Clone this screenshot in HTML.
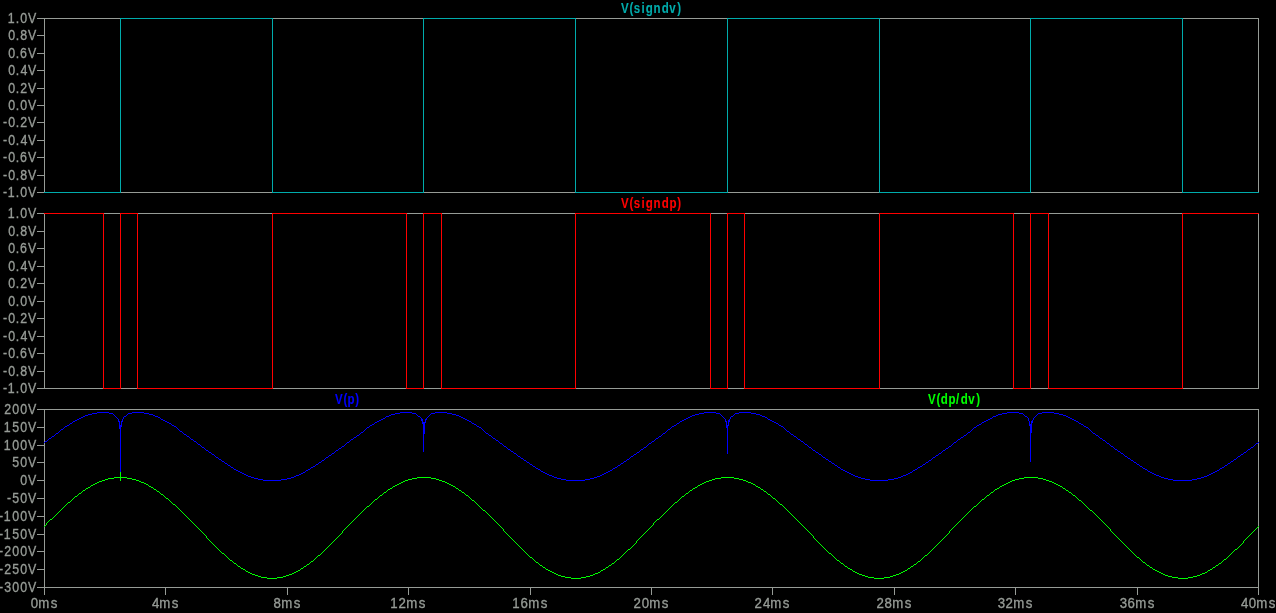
<!DOCTYPE html>
<html><head><meta charset="utf-8"><style>
html,body{margin:0;padding:0;background:#000;width:1276px;height:613px;overflow:hidden}
body{position:relative}
</style></head><body>
<svg width="1276" height="613" shape-rendering="crispEdges" style="position:absolute;left:0;top:0"><path fill="rgb(150,155,150)" d="M44 18h1215v1h-1215zM44 192h1215v1h-1215zM44 18h1v175h-1zM1258 18h1v175h-1zM37 18h7v1h-7zM37 35h7v1h-7zM37 53h7v1h-7zM37 70h7v1h-7zM37 88h7v1h-7zM37 105h7v1h-7zM37 122h7v1h-7zM37 140h7v1h-7zM37 157h7v1h-7zM37 175h7v1h-7zM37 192h7v1h-7zM44 213h1215v1h-1215zM44 388h1215v1h-1215zM44 213h1v176h-1zM1258 213h1v176h-1zM37 213h7v1h-7zM37 231h7v1h-7zM37 248h7v1h-7zM37 266h7v1h-7zM37 283h7v1h-7zM37 301h7v1h-7zM37 318h7v1h-7zM37 336h7v1h-7zM37 353h7v1h-7zM37 371h7v1h-7zM37 388h7v1h-7zM44 409h1215v1h-1215zM44 587h1215v1h-1215zM44 409h1v179h-1zM1258 409h1v179h-1zM37 409h7v1h-7zM37 427h7v1h-7zM37 445h7v1h-7zM37 462h7v1h-7zM37 480h7v1h-7zM37 498h7v1h-7zM37 516h7v1h-7zM37 534h7v1h-7zM37 551h7v1h-7zM37 569h7v1h-7zM37 587h7v1h-7zM44 588h1v7h-1zM165 588h1v7h-1zM287 588h1v7h-1zM408 588h1v7h-1zM530 588h1v7h-1zM651 588h1v7h-1zM772 588h1v7h-1zM894 588h1v7h-1zM1015 588h1v7h-1zM1137 588h1v7h-1zM1258 588h1v7h-1z"/><path fill="rgb(0,172,172)" d="M44 192h77v1h-77zM120 18h1v175h-1zM120 18h153v1h-153zM272 18h1v175h-1zM272 192h152v1h-152zM423 18h1v175h-1zM423 18h153v1h-153zM575 18h1v175h-1zM575 192h153v1h-153zM727 18h1v175h-1zM727 18h153v1h-153zM879 18h1v175h-1zM879 192h152v1h-152zM1030 18h1v175h-1zM1030 18h153v1h-153zM1182 18h1v175h-1zM1182 192h77v1h-77z"/><path fill="rgb(255,0,0)" d="M44 213h60v1h-60zM103 213h1v176h-1zM103 388h18v1h-18zM120 213h1v176h-1zM120 213h18v1h-18zM137 213h1v176h-1zM137 388h136v1h-136zM272 213h1v176h-1zM272 213h135v1h-135zM406 213h1v176h-1zM406 388h18v1h-18zM423 213h1v176h-1zM423 213h19v1h-19zM441 213h1v176h-1zM441 388h135v1h-135zM575 213h1v176h-1zM575 213h136v1h-136zM710 213h1v176h-1zM710 388h18v1h-18zM727 213h1v176h-1zM727 213h18v1h-18zM744 213h1v176h-1zM744 388h136v1h-136zM879 213h1v176h-1zM879 213h135v1h-135zM1013 213h1v176h-1zM1013 388h18v1h-18zM1030 213h1v176h-1zM1030 213h19v1h-19zM1048 213h1v176h-1zM1048 388h135v1h-135zM1182 213h1v176h-1zM1182 213h77v1h-77z"/><path fill="rgb(0,0,255)" d="M44 442h1v1h-1zM45 441h1v1h-1zM46 441h1v1h-1zM47 440h1v1h-1zM48 439h1v1h-1zM49 438h1v1h-1zM50 438h1v1h-1zM51 437h1v1h-1zM52 436h1v1h-1zM53 436h1v1h-1zM54 435h1v1h-1zM55 434h1v1h-1zM56 433h1v1h-1zM57 433h1v1h-1zM58 432h1v1h-1zM59 431h1v1h-1zM60 430h1v1h-1zM61 429h1v1h-1zM62 429h1v1h-1zM63 428h1v1h-1zM64 427h1v1h-1zM65 426h1v1h-1zM66 426h1v1h-1zM67 425h1v1h-1zM68 425h1v1h-1zM69 424h1v1h-1zM70 423h1v1h-1zM71 423h1v1h-1zM72 422h1v1h-1zM73 421h1v1h-1zM74 421h1v1h-1zM75 420h1v1h-1zM76 420h1v1h-1zM77 419h1v1h-1zM78 419h1v1h-1zM79 418h1v1h-1zM80 418h1v1h-1zM81 417h1v1h-1zM82 417h1v1h-1zM83 416h1v1h-1zM84 416h1v1h-1zM85 415h1v1h-1zM86 415h1v1h-1zM87 415h1v1h-1zM88 414h1v1h-1zM89 414h1v1h-1zM90 414h1v1h-1zM91 414h1v1h-1zM92 413h1v1h-1zM93 413h1v1h-1zM94 413h1v1h-1zM95 413h1v1h-1zM96 413h1v1h-1zM97 412h1v1h-1zM98 412h1v1h-1zM99 412h1v1h-1zM100 412h1v1h-1zM101 412h1v1h-1zM102 412h1v1h-1zM103 412h1v1h-1zM104 412h1v1h-1zM105 412h1v1h-1zM106 412h1v1h-1zM107 412h1v1h-1zM108 412h1v1h-1zM109 413h1v1h-1zM110 413h1v1h-1zM111 413h1v1h-1zM112 413h1v1h-1zM113 414h1v1h-1zM114 415h1v1h-1zM115 416h1v1h-1zM116 417h1v1h-1zM117 418h1v1h-1zM118 419h1v3h-1zM119 421h1v8h-1zM120 425h1v47h-1zM121 421h1v6h-1zM122 419h1v3h-1zM123 417h1v2h-1zM124 416h1v1h-1zM125 416h1v1h-1zM126 415h1v1h-1zM127 414h1v1h-1zM128 413h1v1h-1zM129 413h1v1h-1zM130 413h1v1h-1zM131 413h1v1h-1zM132 412h1v1h-1zM133 412h1v1h-1zM134 412h1v1h-1zM135 412h1v1h-1zM136 412h1v1h-1zM137 412h1v1h-1zM138 412h1v1h-1zM139 412h1v1h-1zM140 412h1v1h-1zM141 412h1v1h-1zM142 412h1v1h-1zM143 412h1v1h-1zM144 413h1v1h-1zM145 413h1v1h-1zM146 413h1v1h-1zM147 413h1v1h-1zM148 413h1v1h-1zM149 414h1v1h-1zM150 414h1v1h-1zM151 414h1v1h-1zM152 414h1v1h-1zM153 415h1v1h-1zM154 415h1v1h-1zM155 416h1v1h-1zM156 416h1v1h-1zM157 416h1v1h-1zM158 417h1v1h-1zM159 417h1v1h-1zM160 418h1v1h-1zM161 419h1v1h-1zM162 419h1v1h-1zM163 420h1v1h-1zM164 420h1v1h-1zM165 421h1v1h-1zM166 421h1v1h-1zM167 422h1v1h-1zM168 422h1v1h-1zM169 423h1v1h-1zM170 423h1v1h-1zM171 424h1v1h-1zM172 425h1v1h-1zM173 425h1v1h-1zM174 426h1v1h-1zM175 426h1v1h-1zM176 427h1v1h-1zM177 428h1v1h-1zM178 429h1v1h-1zM179 430h1v1h-1zM180 431h1v1h-1zM181 431h1v1h-1zM182 432h1v1h-1zM183 433h1v1h-1zM184 434h1v1h-1zM185 434h1v1h-1zM186 435h1v1h-1zM187 436h1v1h-1zM188 436h1v1h-1zM189 437h1v1h-1zM190 438h1v1h-1zM191 439h1v1h-1zM192 439h1v1h-1zM193 440h1v1h-1zM194 441h1v1h-1zM195 441h1v1h-1zM196 442h1v1h-1zM197 443h1v1h-1zM198 444h1v1h-1zM199 444h1v1h-1zM200 445h1v1h-1zM201 446h1v1h-1zM202 447h1v1h-1zM203 447h1v1h-1zM204 448h1v1h-1zM205 449h1v1h-1zM206 450h1v1h-1zM207 450h1v1h-1zM208 451h1v1h-1zM209 452h1v1h-1zM210 452h1v1h-1zM211 453h1v1h-1zM212 454h1v1h-1zM213 454h1v1h-1zM214 455h1v1h-1zM215 456h1v1h-1zM216 457h1v1h-1zM217 457h1v1h-1zM218 458h1v1h-1zM219 459h1v1h-1zM220 459h1v1h-1zM221 460h1v1h-1zM222 461h1v1h-1zM223 461h1v1h-1zM224 462h1v1h-1zM225 463h1v1h-1zM226 463h1v1h-1zM227 464h1v1h-1zM228 465h1v1h-1zM229 465h1v1h-1zM230 466h1v1h-1zM231 467h1v1h-1zM232 467h1v1h-1zM233 468h1v1h-1zM234 469h1v1h-1zM235 469h1v1h-1zM236 470h1v1h-1zM237 470h1v1h-1zM238 471h1v1h-1zM239 471h1v1h-1zM240 472h1v1h-1zM241 472h1v1h-1zM242 473h1v1h-1zM243 473h1v1h-1zM244 474h1v1h-1zM245 474h1v1h-1zM246 475h1v1h-1zM247 475h1v1h-1zM248 476h1v1h-1zM249 476h1v1h-1zM250 476h1v1h-1zM251 477h1v1h-1zM252 477h1v1h-1zM253 477h1v1h-1zM254 478h1v1h-1zM255 478h1v1h-1zM256 478h1v1h-1zM257 478h1v1h-1zM258 479h1v1h-1zM259 479h1v1h-1zM260 479h1v1h-1zM261 479h1v1h-1zM262 479h1v1h-1zM263 480h1v1h-1zM264 480h1v1h-1zM265 480h1v1h-1zM266 480h1v1h-1zM267 480h1v1h-1zM268 480h1v1h-1zM269 480h1v1h-1zM270 480h1v1h-1zM271 480h1v1h-1zM272 480h1v1h-1zM273 480h1v1h-1zM274 480h1v1h-1zM275 480h1v1h-1zM276 480h1v1h-1zM277 480h1v1h-1zM278 480h1v1h-1zM279 480h1v1h-1zM280 480h1v1h-1zM281 479h1v1h-1zM282 479h1v1h-1zM283 479h1v1h-1zM284 479h1v1h-1zM285 479h1v1h-1zM286 479h1v1h-1zM287 478h1v1h-1zM288 478h1v1h-1zM289 478h1v1h-1zM290 478h1v1h-1zM291 477h1v1h-1zM292 477h1v1h-1zM293 477h1v1h-1zM294 476h1v1h-1zM295 476h1v1h-1zM296 475h1v1h-1zM297 475h1v1h-1zM298 475h1v1h-1zM299 474h1v1h-1zM300 474h1v1h-1zM301 473h1v1h-1zM302 473h1v1h-1zM303 472h1v1h-1zM304 472h1v1h-1zM305 471h1v1h-1zM306 470h1v1h-1zM307 470h1v1h-1zM308 469h1v1h-1zM309 469h1v1h-1zM310 468h1v1h-1zM311 467h1v1h-1zM312 467h1v1h-1zM313 466h1v1h-1zM314 466h1v1h-1zM315 465h1v1h-1zM316 464h1v1h-1zM317 464h1v1h-1zM318 463h1v1h-1zM319 462h1v1h-1zM320 462h1v1h-1zM321 461h1v1h-1zM322 460h1v1h-1zM323 460h1v1h-1zM324 459h1v1h-1zM325 458h1v1h-1zM326 457h1v1h-1zM327 457h1v1h-1zM328 456h1v1h-1zM329 455h1v1h-1zM330 455h1v1h-1zM331 454h1v1h-1zM332 453h1v1h-1zM333 453h1v1h-1zM334 452h1v1h-1zM335 451h1v1h-1zM336 450h1v1h-1zM337 450h1v1h-1zM338 449h1v1h-1zM339 448h1v1h-1zM340 448h1v1h-1zM341 447h1v1h-1zM342 446h1v1h-1zM343 446h1v1h-1zM344 445h1v1h-1zM345 444h1v1h-1zM346 443h1v1h-1zM347 442h1v1h-1zM348 442h1v1h-1zM349 441h1v1h-1zM350 440h1v1h-1zM351 439h1v1h-1zM352 439h1v1h-1zM353 438h1v1h-1zM354 437h1v1h-1zM355 437h1v1h-1zM356 436h1v1h-1zM357 435h1v1h-1zM358 435h1v1h-1zM359 434h1v1h-1zM360 433h1v1h-1zM361 432h1v1h-1zM362 432h1v1h-1zM363 431h1v1h-1zM364 430h1v1h-1zM365 429h1v1h-1zM366 428h1v1h-1zM367 427h1v1h-1zM368 427h1v1h-1zM369 426h1v1h-1zM370 425h1v1h-1zM371 425h1v1h-1zM372 424h1v1h-1zM373 424h1v1h-1zM374 423h1v1h-1zM375 422h1v1h-1zM376 422h1v1h-1zM377 421h1v1h-1zM378 421h1v1h-1zM379 420h1v1h-1zM380 420h1v1h-1zM381 419h1v1h-1zM382 419h1v1h-1zM383 418h1v1h-1zM384 418h1v1h-1zM385 417h1v1h-1zM386 416h1v1h-1zM387 416h1v1h-1zM388 416h1v1h-1zM389 415h1v1h-1zM390 415h1v1h-1zM391 414h1v1h-1zM392 414h1v1h-1zM393 414h1v1h-1zM394 414h1v1h-1zM395 413h1v1h-1zM396 413h1v1h-1zM397 413h1v1h-1zM398 413h1v1h-1zM399 413h1v1h-1zM400 412h1v1h-1zM401 412h1v1h-1zM402 412h1v1h-1zM403 412h1v1h-1zM404 412h1v1h-1zM405 412h1v1h-1zM406 412h1v1h-1zM407 412h1v1h-1zM408 412h1v1h-1zM409 412h1v1h-1zM410 412h1v1h-1zM411 412h1v1h-1zM412 413h1v1h-1zM413 413h1v1h-1zM414 413h1v1h-1zM415 413h1v1h-1zM416 414h1v1h-1zM417 415h1v1h-1zM418 416h1v1h-1zM419 416h1v1h-1zM420 417h1v1h-1zM421 418h1v3h-1zM422 419h1v5h-1zM423 422h1v30h-1zM424 422h1v12h-1zM425 419h1v4h-1zM426 418h1v2h-1zM427 417h1v1h-1zM428 416h1v1h-1zM429 415h1v1h-1zM430 414h1v1h-1zM431 413h1v1h-1zM432 413h1v1h-1zM433 413h1v1h-1zM434 413h1v1h-1zM435 412h1v1h-1zM436 412h1v1h-1zM437 412h1v1h-1zM438 412h1v1h-1zM439 412h1v1h-1zM440 412h1v1h-1zM441 412h1v1h-1zM442 412h1v1h-1zM443 412h1v1h-1zM444 412h1v1h-1zM445 412h1v1h-1zM446 412h1v1h-1zM447 413h1v1h-1zM448 413h1v1h-1zM449 413h1v1h-1zM450 413h1v1h-1zM451 413h1v1h-1zM452 414h1v1h-1zM453 414h1v1h-1zM454 414h1v1h-1zM455 414h1v1h-1zM456 415h1v1h-1zM457 415h1v1h-1zM458 415h1v1h-1zM459 416h1v1h-1zM460 416h1v1h-1zM461 417h1v1h-1zM462 417h1v1h-1zM463 418h1v1h-1zM464 418h1v1h-1zM465 419h1v1h-1zM466 419h1v1h-1zM467 420h1v1h-1zM468 420h1v1h-1zM469 421h1v1h-1zM470 421h1v1h-1zM471 422h1v1h-1zM472 423h1v1h-1zM473 423h1v1h-1zM474 424h1v1h-1zM475 424h1v1h-1zM476 425h1v1h-1zM477 426h1v1h-1zM478 426h1v1h-1zM479 427h1v1h-1zM480 427h1v1h-1zM481 428h1v1h-1zM482 429h1v1h-1zM483 430h1v1h-1zM484 431h1v1h-1zM485 432h1v1h-1zM486 433h1v1h-1zM487 433h1v1h-1zM488 434h1v1h-1zM489 435h1v1h-1zM490 435h1v1h-1zM491 436h1v1h-1zM492 437h1v1h-1zM493 438h1v1h-1zM494 438h1v1h-1zM495 439h1v1h-1zM496 440h1v1h-1zM497 440h1v1h-1zM498 441h1v1h-1zM499 442h1v1h-1zM500 443h1v1h-1zM501 443h1v1h-1zM502 444h1v1h-1zM503 445h1v1h-1zM504 446h1v1h-1zM505 446h1v1h-1zM506 447h1v1h-1zM507 448h1v1h-1zM508 449h1v1h-1zM509 449h1v1h-1zM510 450h1v1h-1zM511 451h1v1h-1zM512 451h1v1h-1zM513 452h1v1h-1zM514 453h1v1h-1zM515 453h1v1h-1zM516 454h1v1h-1zM517 455h1v1h-1zM518 456h1v1h-1zM519 456h1v1h-1zM520 457h1v1h-1zM521 458h1v1h-1zM522 458h1v1h-1zM523 459h1v1h-1zM524 460h1v1h-1zM525 460h1v1h-1zM526 461h1v1h-1zM527 462h1v1h-1zM528 462h1v1h-1zM529 463h1v1h-1zM530 464h1v1h-1zM531 464h1v1h-1zM532 465h1v1h-1zM533 466h1v1h-1zM534 466h1v1h-1zM535 467h1v1h-1zM536 468h1v1h-1zM537 468h1v1h-1zM538 469h1v1h-1zM539 469h1v1h-1zM540 470h1v1h-1zM541 471h1v1h-1zM542 471h1v1h-1zM543 472h1v1h-1zM544 472h1v1h-1zM545 473h1v1h-1zM546 473h1v1h-1zM547 474h1v1h-1zM548 474h1v1h-1zM549 475h1v1h-1zM550 475h1v1h-1zM551 475h1v1h-1zM552 476h1v1h-1zM553 476h1v1h-1zM554 477h1v1h-1zM555 477h1v1h-1zM556 477h1v1h-1zM557 478h1v1h-1zM558 478h1v1h-1zM559 478h1v1h-1zM560 478h1v1h-1zM561 479h1v1h-1zM562 479h1v1h-1zM563 479h1v1h-1zM564 479h1v1h-1zM565 479h1v1h-1zM566 480h1v1h-1zM567 480h1v1h-1zM568 480h1v1h-1zM569 480h1v1h-1zM570 480h1v1h-1zM571 480h1v1h-1zM572 480h1v1h-1zM573 480h1v1h-1zM574 480h1v1h-1zM575 480h1v1h-1zM576 480h1v1h-1zM577 480h1v1h-1zM578 480h1v1h-1zM579 480h1v1h-1zM580 480h1v1h-1zM581 480h1v1h-1zM582 480h1v1h-1zM583 480h1v1h-1zM584 480h1v1h-1zM585 479h1v1h-1zM586 479h1v1h-1zM587 479h1v1h-1zM588 479h1v1h-1zM589 479h1v1h-1zM590 478h1v1h-1zM591 478h1v1h-1zM592 478h1v1h-1zM593 478h1v1h-1zM594 477h1v1h-1zM595 477h1v1h-1zM596 477h1v1h-1zM597 476h1v1h-1zM598 476h1v1h-1zM599 476h1v1h-1zM600 475h1v1h-1zM601 475h1v1h-1zM602 474h1v1h-1zM603 474h1v1h-1zM604 473h1v1h-1zM605 473h1v1h-1zM606 472h1v1h-1zM607 472h1v1h-1zM608 471h1v1h-1zM609 471h1v1h-1zM610 470h1v1h-1zM611 470h1v1h-1zM612 469h1v1h-1zM613 468h1v1h-1zM614 468h1v1h-1zM615 467h1v1h-1zM616 467h1v1h-1zM617 466h1v1h-1zM618 465h1v1h-1zM619 465h1v1h-1zM620 464h1v1h-1zM621 463h1v1h-1zM622 463h1v1h-1zM623 462h1v1h-1zM624 461h1v1h-1zM625 461h1v1h-1zM626 460h1v1h-1zM627 459h1v1h-1zM628 459h1v1h-1zM629 458h1v1h-1zM630 457h1v1h-1zM631 456h1v1h-1zM632 456h1v1h-1zM633 455h1v1h-1zM634 454h1v1h-1zM635 454h1v1h-1zM636 453h1v1h-1zM637 452h1v1h-1zM638 452h1v1h-1zM639 451h1v1h-1zM640 450h1v1h-1zM641 449h1v1h-1zM642 449h1v1h-1zM643 448h1v1h-1zM644 447h1v1h-1zM645 447h1v1h-1zM646 446h1v1h-1zM647 445h1v1h-1zM648 444h1v1h-1zM649 443h1v1h-1zM650 443h1v1h-1zM651 442h1v1h-1zM652 441h1v1h-1zM653 441h1v1h-1zM654 440h1v1h-1zM655 439h1v1h-1zM656 438h1v1h-1zM657 438h1v1h-1zM658 437h1v1h-1zM659 436h1v1h-1zM660 436h1v1h-1zM661 435h1v1h-1zM662 434h1v1h-1zM663 433h1v1h-1zM664 433h1v1h-1zM665 432h1v1h-1zM666 431h1v1h-1zM667 430h1v1h-1zM668 429h1v1h-1zM669 429h1v1h-1zM670 428h1v1h-1zM671 427h1v1h-1zM672 426h1v1h-1zM673 426h1v1h-1zM674 425h1v1h-1zM675 425h1v1h-1zM676 424h1v1h-1zM677 423h1v1h-1zM678 423h1v1h-1zM679 422h1v1h-1zM680 421h1v1h-1zM681 421h1v1h-1zM682 420h1v1h-1zM683 420h1v1h-1zM684 419h1v1h-1zM685 419h1v1h-1zM686 418h1v1h-1zM687 418h1v1h-1zM688 417h1v1h-1zM689 417h1v1h-1zM690 416h1v1h-1zM691 416h1v1h-1zM692 415h1v1h-1zM693 415h1v1h-1zM694 415h1v1h-1zM695 414h1v1h-1zM696 414h1v1h-1zM697 414h1v1h-1zM698 414h1v1h-1zM699 413h1v1h-1zM700 413h1v1h-1zM701 413h1v1h-1zM702 413h1v1h-1zM703 413h1v1h-1zM704 412h1v1h-1zM705 412h1v1h-1zM706 412h1v1h-1zM707 412h1v1h-1zM708 412h1v1h-1zM709 412h1v1h-1zM710 412h1v1h-1zM711 412h1v1h-1zM712 412h1v1h-1zM713 412h1v1h-1zM714 412h1v1h-1zM715 412h1v1h-1zM716 413h1v1h-1zM717 413h1v1h-1zM718 413h1v1h-1zM719 413h1v1h-1zM720 414h1v1h-1zM721 415h1v1h-1zM722 416h1v1h-1zM723 417h1v1h-1zM724 418h1v1h-1zM725 419h1v3h-1zM726 421h1v7h-1zM727 425h1v29h-1zM728 420h1v6h-1zM729 419h1v3h-1zM730 417h1v2h-1zM731 416h1v1h-1zM732 416h1v1h-1zM733 415h1v1h-1zM734 414h1v1h-1zM735 413h1v1h-1zM736 413h1v1h-1zM737 413h1v1h-1zM738 413h1v1h-1zM739 412h1v1h-1zM740 412h1v1h-1zM741 412h1v1h-1zM742 412h1v1h-1zM743 412h1v1h-1zM744 412h1v1h-1zM745 412h1v1h-1zM746 412h1v1h-1zM747 412h1v1h-1zM748 412h1v1h-1zM749 412h1v1h-1zM750 412h1v1h-1zM751 413h1v1h-1zM752 413h1v1h-1zM753 413h1v1h-1zM754 413h1v1h-1zM755 413h1v1h-1zM756 414h1v1h-1zM757 414h1v1h-1zM758 414h1v1h-1zM759 414h1v1h-1zM760 415h1v1h-1zM761 415h1v1h-1zM762 416h1v1h-1zM763 416h1v1h-1zM764 416h1v1h-1zM765 417h1v1h-1zM766 417h1v1h-1zM767 418h1v1h-1zM768 419h1v1h-1zM769 419h1v1h-1zM770 420h1v1h-1zM771 420h1v1h-1zM772 421h1v1h-1zM773 421h1v1h-1zM774 422h1v1h-1zM775 422h1v1h-1zM776 423h1v1h-1zM777 423h1v1h-1zM778 424h1v1h-1zM779 425h1v1h-1zM780 425h1v1h-1zM781 426h1v1h-1zM782 426h1v1h-1zM783 427h1v1h-1zM784 428h1v1h-1zM785 429h1v1h-1zM786 430h1v1h-1zM787 431h1v1h-1zM788 431h1v1h-1zM789 432h1v1h-1zM790 433h1v1h-1zM791 434h1v1h-1zM792 434h1v1h-1zM793 435h1v1h-1zM794 436h1v1h-1zM795 436h1v1h-1zM796 437h1v1h-1zM797 438h1v1h-1zM798 439h1v1h-1zM799 439h1v1h-1zM800 440h1v1h-1zM801 441h1v1h-1zM802 441h1v1h-1zM803 442h1v1h-1zM804 443h1v1h-1zM805 444h1v1h-1zM806 444h1v1h-1zM807 445h1v1h-1zM808 446h1v1h-1zM809 447h1v1h-1zM810 447h1v1h-1zM811 448h1v1h-1zM812 449h1v1h-1zM813 450h1v1h-1zM814 450h1v1h-1zM815 451h1v1h-1zM816 452h1v1h-1zM817 452h1v1h-1zM818 453h1v1h-1zM819 454h1v1h-1zM820 454h1v1h-1zM821 455h1v1h-1zM822 456h1v1h-1zM823 457h1v1h-1zM824 457h1v1h-1zM825 458h1v1h-1zM826 459h1v1h-1zM827 459h1v1h-1zM828 460h1v1h-1zM829 461h1v1h-1zM830 461h1v1h-1zM831 462h1v1h-1zM832 463h1v1h-1zM833 463h1v1h-1zM834 464h1v1h-1zM835 465h1v1h-1zM836 465h1v1h-1zM837 466h1v1h-1zM838 467h1v1h-1zM839 467h1v1h-1zM840 468h1v1h-1zM841 469h1v1h-1zM842 469h1v1h-1zM843 470h1v1h-1zM844 470h1v1h-1zM845 471h1v1h-1zM846 471h1v1h-1zM847 472h1v1h-1zM848 472h1v1h-1zM849 473h1v1h-1zM850 473h1v1h-1zM851 474h1v1h-1zM852 474h1v1h-1zM853 475h1v1h-1zM854 475h1v1h-1zM855 476h1v1h-1zM856 476h1v1h-1zM857 476h1v1h-1zM858 477h1v1h-1zM859 477h1v1h-1zM860 477h1v1h-1zM861 478h1v1h-1zM862 478h1v1h-1zM863 478h1v1h-1zM864 478h1v1h-1zM865 479h1v1h-1zM866 479h1v1h-1zM867 479h1v1h-1zM868 479h1v1h-1zM869 479h1v1h-1zM870 480h1v1h-1zM871 480h1v1h-1zM872 480h1v1h-1zM873 480h1v1h-1zM874 480h1v1h-1zM875 480h1v1h-1zM876 480h1v1h-1zM877 480h1v1h-1zM878 480h1v1h-1zM879 480h1v1h-1zM880 480h1v1h-1zM881 480h1v1h-1zM882 480h1v1h-1zM883 480h1v1h-1zM884 480h1v1h-1zM885 480h1v1h-1zM886 480h1v1h-1zM887 480h1v1h-1zM888 479h1v1h-1zM889 479h1v1h-1zM890 479h1v1h-1zM891 479h1v1h-1zM892 479h1v1h-1zM893 479h1v1h-1zM894 478h1v1h-1zM895 478h1v1h-1zM896 478h1v1h-1zM897 478h1v1h-1zM898 477h1v1h-1zM899 477h1v1h-1zM900 477h1v1h-1zM901 476h1v1h-1zM902 476h1v1h-1zM903 475h1v1h-1zM904 475h1v1h-1zM905 475h1v1h-1zM906 474h1v1h-1zM907 474h1v1h-1zM908 473h1v1h-1zM909 473h1v1h-1zM910 472h1v1h-1zM911 472h1v1h-1zM912 471h1v1h-1zM913 470h1v1h-1zM914 470h1v1h-1zM915 469h1v1h-1zM916 469h1v1h-1zM917 468h1v1h-1zM918 467h1v1h-1zM919 467h1v1h-1zM920 466h1v1h-1zM921 466h1v1h-1zM922 465h1v1h-1zM923 464h1v1h-1zM924 464h1v1h-1zM925 463h1v1h-1zM926 462h1v1h-1zM927 462h1v1h-1zM928 461h1v1h-1zM929 460h1v1h-1zM930 460h1v1h-1zM931 459h1v1h-1zM932 458h1v1h-1zM933 457h1v1h-1zM934 457h1v1h-1zM935 456h1v1h-1zM936 455h1v1h-1zM937 455h1v1h-1zM938 454h1v1h-1zM939 453h1v1h-1zM940 453h1v1h-1zM941 452h1v1h-1zM942 451h1v1h-1zM943 450h1v1h-1zM944 450h1v1h-1zM945 449h1v1h-1zM946 448h1v1h-1zM947 448h1v1h-1zM948 447h1v1h-1zM949 446h1v1h-1zM950 446h1v1h-1zM951 445h1v1h-1zM952 444h1v1h-1zM953 443h1v1h-1zM954 442h1v1h-1zM955 442h1v1h-1zM956 441h1v1h-1zM957 440h1v1h-1zM958 439h1v1h-1zM959 439h1v1h-1zM960 438h1v1h-1zM961 437h1v1h-1zM962 437h1v1h-1zM963 436h1v1h-1zM964 435h1v1h-1zM965 435h1v1h-1zM966 434h1v1h-1zM967 433h1v1h-1zM968 432h1v1h-1zM969 432h1v1h-1zM970 431h1v1h-1zM971 430h1v1h-1zM972 429h1v1h-1zM973 428h1v1h-1zM974 427h1v1h-1zM975 427h1v1h-1zM976 426h1v1h-1zM977 425h1v1h-1zM978 425h1v1h-1zM979 424h1v1h-1zM980 424h1v1h-1zM981 423h1v1h-1zM982 422h1v1h-1zM983 422h1v1h-1zM984 421h1v1h-1zM985 421h1v1h-1zM986 420h1v1h-1zM987 420h1v1h-1zM988 419h1v1h-1zM989 419h1v1h-1zM990 418h1v1h-1zM991 418h1v1h-1zM992 417h1v1h-1zM993 416h1v1h-1zM994 416h1v1h-1zM995 416h1v1h-1zM996 415h1v1h-1zM997 415h1v1h-1zM998 414h1v1h-1zM999 414h1v1h-1zM1000 414h1v1h-1zM1001 414h1v1h-1zM1002 413h1v1h-1zM1003 413h1v1h-1zM1004 413h1v1h-1zM1005 413h1v1h-1zM1006 413h1v1h-1zM1007 412h1v1h-1zM1008 412h1v1h-1zM1009 412h1v1h-1zM1010 412h1v1h-1zM1011 412h1v1h-1zM1012 412h1v1h-1zM1013 412h1v1h-1zM1014 412h1v1h-1zM1015 412h1v1h-1zM1016 412h1v1h-1zM1017 412h1v1h-1zM1018 412h1v1h-1zM1019 413h1v1h-1zM1020 413h1v1h-1zM1021 413h1v1h-1zM1022 413h1v1h-1zM1023 414h1v1h-1zM1024 415h1v1h-1zM1025 416h1v1h-1zM1026 416h1v1h-1zM1027 417h1v1h-1zM1028 418h1v3h-1zM1029 421h1v5h-1zM1030 424h1v38h-1zM1031 421h1v12h-1zM1032 420h1v3h-1zM1033 418h1v2h-1zM1034 417h1v1h-1zM1035 416h1v1h-1zM1036 415h1v1h-1zM1037 414h1v1h-1zM1038 413h1v1h-1zM1039 413h1v1h-1zM1040 413h1v1h-1zM1041 413h1v1h-1zM1042 412h1v1h-1zM1043 412h1v1h-1zM1044 412h1v1h-1zM1045 412h1v1h-1zM1046 412h1v1h-1zM1047 412h1v1h-1zM1048 412h1v1h-1zM1049 412h1v1h-1zM1050 412h1v1h-1zM1051 412h1v1h-1zM1052 412h1v1h-1zM1053 412h1v1h-1zM1054 413h1v1h-1zM1055 413h1v1h-1zM1056 413h1v1h-1zM1057 413h1v1h-1zM1058 413h1v1h-1zM1059 414h1v1h-1zM1060 414h1v1h-1zM1061 414h1v1h-1zM1062 414h1v1h-1zM1063 415h1v1h-1zM1064 415h1v1h-1zM1065 415h1v1h-1zM1066 416h1v1h-1zM1067 416h1v1h-1zM1068 417h1v1h-1zM1069 417h1v1h-1zM1070 418h1v1h-1zM1071 418h1v1h-1zM1072 419h1v1h-1zM1073 419h1v1h-1zM1074 420h1v1h-1zM1075 420h1v1h-1zM1076 421h1v1h-1zM1077 421h1v1h-1zM1078 422h1v1h-1zM1079 423h1v1h-1zM1080 423h1v1h-1zM1081 424h1v1h-1zM1082 424h1v1h-1zM1083 425h1v1h-1zM1084 426h1v1h-1zM1085 426h1v1h-1zM1086 427h1v1h-1zM1087 427h1v1h-1zM1088 428h1v1h-1zM1089 429h1v1h-1zM1090 430h1v1h-1zM1091 431h1v1h-1zM1092 432h1v1h-1zM1093 433h1v1h-1zM1094 433h1v1h-1zM1095 434h1v1h-1zM1096 435h1v1h-1zM1097 435h1v1h-1zM1098 436h1v1h-1zM1099 437h1v1h-1zM1100 438h1v1h-1zM1101 438h1v1h-1zM1102 439h1v1h-1zM1103 440h1v1h-1zM1104 440h1v1h-1zM1105 441h1v1h-1zM1106 442h1v1h-1zM1107 443h1v1h-1zM1108 443h1v1h-1zM1109 444h1v1h-1zM1110 445h1v1h-1zM1111 446h1v1h-1zM1112 446h1v1h-1zM1113 447h1v1h-1zM1114 448h1v1h-1zM1115 449h1v1h-1zM1116 449h1v1h-1zM1117 450h1v1h-1zM1118 451h1v1h-1zM1119 451h1v1h-1zM1120 452h1v1h-1zM1121 453h1v1h-1zM1122 453h1v1h-1zM1123 454h1v1h-1zM1124 455h1v1h-1zM1125 456h1v1h-1zM1126 456h1v1h-1zM1127 457h1v1h-1zM1128 458h1v1h-1zM1129 458h1v1h-1zM1130 459h1v1h-1zM1131 460h1v1h-1zM1132 460h1v1h-1zM1133 461h1v1h-1zM1134 462h1v1h-1zM1135 462h1v1h-1zM1136 463h1v1h-1zM1137 464h1v1h-1zM1138 464h1v1h-1zM1139 465h1v1h-1zM1140 466h1v1h-1zM1141 466h1v1h-1zM1142 467h1v1h-1zM1143 468h1v1h-1zM1144 468h1v1h-1zM1145 469h1v1h-1zM1146 469h1v1h-1zM1147 470h1v1h-1zM1148 471h1v1h-1zM1149 471h1v1h-1zM1150 472h1v1h-1zM1151 472h1v1h-1zM1152 473h1v1h-1zM1153 473h1v1h-1zM1154 474h1v1h-1zM1155 474h1v1h-1zM1156 475h1v1h-1zM1157 475h1v1h-1zM1158 475h1v1h-1zM1159 476h1v1h-1zM1160 476h1v1h-1zM1161 477h1v1h-1zM1162 477h1v1h-1zM1163 477h1v1h-1zM1164 478h1v1h-1zM1165 478h1v1h-1zM1166 478h1v1h-1zM1167 478h1v1h-1zM1168 479h1v1h-1zM1169 479h1v1h-1zM1170 479h1v1h-1zM1171 479h1v1h-1zM1172 479h1v1h-1zM1173 480h1v1h-1zM1174 480h1v1h-1zM1175 480h1v1h-1zM1176 480h1v1h-1zM1177 480h1v1h-1zM1178 480h1v1h-1zM1179 480h1v1h-1zM1180 480h1v1h-1zM1181 480h1v1h-1zM1182 480h1v1h-1zM1183 480h1v1h-1zM1184 480h1v1h-1zM1185 480h1v1h-1zM1186 480h1v1h-1zM1187 480h1v1h-1zM1188 480h1v1h-1zM1189 480h1v1h-1zM1190 480h1v1h-1zM1191 480h1v1h-1zM1192 479h1v1h-1zM1193 479h1v1h-1zM1194 479h1v1h-1zM1195 479h1v1h-1zM1196 479h1v1h-1zM1197 478h1v1h-1zM1198 478h1v1h-1zM1199 478h1v1h-1zM1200 478h1v1h-1zM1201 477h1v1h-1zM1202 477h1v1h-1zM1203 477h1v1h-1zM1204 476h1v1h-1zM1205 476h1v1h-1zM1206 476h1v1h-1zM1207 475h1v1h-1zM1208 475h1v1h-1zM1209 474h1v1h-1zM1210 474h1v1h-1zM1211 473h1v1h-1zM1212 473h1v1h-1zM1213 472h1v1h-1zM1214 472h1v1h-1zM1215 471h1v1h-1zM1216 471h1v1h-1zM1217 470h1v1h-1zM1218 470h1v1h-1zM1219 469h1v1h-1zM1220 468h1v1h-1zM1221 468h1v1h-1zM1222 467h1v1h-1zM1223 467h1v1h-1zM1224 466h1v1h-1zM1225 465h1v1h-1zM1226 465h1v1h-1zM1227 464h1v1h-1zM1228 463h1v1h-1zM1229 463h1v1h-1zM1230 462h1v1h-1zM1231 461h1v1h-1zM1232 461h1v1h-1zM1233 460h1v1h-1zM1234 459h1v1h-1zM1235 459h1v1h-1zM1236 458h1v1h-1zM1237 457h1v1h-1zM1238 456h1v1h-1zM1239 456h1v1h-1zM1240 455h1v1h-1zM1241 454h1v1h-1zM1242 454h1v1h-1zM1243 453h1v1h-1zM1244 452h1v1h-1zM1245 452h1v1h-1zM1246 451h1v1h-1zM1247 450h1v1h-1zM1248 449h1v1h-1zM1249 449h1v1h-1zM1250 448h1v1h-1zM1251 447h1v1h-1zM1252 447h1v1h-1zM1253 446h1v1h-1zM1254 445h1v1h-1zM1255 444h1v1h-1zM1256 443h1v1h-1zM1257 443h1v1h-1zM1258 442h1v1h-1z"/><path fill="rgb(0,255,0)" d="M44 526h1v1h-1zM45 525h1v1h-1zM46 523h1v2h-1zM47 522h1v1h-1zM48 521h1v1h-1zM49 520h1v1h-1zM50 519h1v1h-1zM51 519h1v1h-1zM52 518h1v1h-1zM53 517h1v1h-1zM54 516h1v1h-1zM55 515h1v1h-1zM56 514h1v1h-1zM57 513h1v1h-1zM58 512h1v1h-1zM59 511h1v1h-1zM60 510h1v1h-1zM61 509h1v1h-1zM62 508h1v1h-1zM63 507h1v1h-1zM64 506h1v1h-1zM65 505h1v1h-1zM66 504h1v1h-1zM67 503h1v1h-1zM68 502h1v1h-1zM69 502h1v1h-1zM70 501h1v1h-1zM71 500h1v1h-1zM72 499h1v1h-1zM73 498h1v1h-1zM74 497h1v1h-1zM75 496h1v1h-1zM76 496h1v1h-1zM77 495h1v1h-1zM78 494h1v1h-1zM79 493h1v1h-1zM80 493h1v1h-1zM81 492h1v1h-1zM82 491h1v1h-1zM83 490h1v1h-1zM84 490h1v1h-1zM85 489h1v1h-1zM86 488h1v1h-1zM87 488h1v1h-1zM88 487h1v1h-1zM89 487h1v1h-1zM90 486h1v1h-1zM91 485h1v1h-1zM92 485h1v1h-1zM93 484h1v1h-1zM94 484h1v1h-1zM95 483h1v1h-1zM96 483h1v1h-1zM97 482h1v1h-1zM98 482h1v1h-1zM99 481h1v1h-1zM100 481h1v1h-1zM101 481h1v1h-1zM102 480h1v1h-1zM103 480h1v1h-1zM104 480h1v1h-1zM105 479h1v1h-1zM106 479h1v1h-1zM107 479h1v1h-1zM108 478h1v1h-1zM109 478h1v1h-1zM110 478h1v1h-1zM111 478h1v1h-1zM112 478h1v1h-1zM113 478h1v1h-1zM114 477h1v1h-1zM115 477h1v1h-1zM116 477h1v1h-1zM117 477h1v1h-1zM118 477h1v1h-1zM119 477h1v1h-1zM120 472h1v9h-1zM121 477h1v1h-1zM122 477h1v1h-1zM123 477h1v1h-1zM124 477h1v1h-1zM125 477h1v1h-1zM126 477h1v1h-1zM127 478h1v1h-1zM128 478h1v1h-1zM129 478h1v1h-1zM130 478h1v1h-1zM131 478h1v1h-1zM132 479h1v1h-1zM133 479h1v1h-1zM134 479h1v1h-1zM135 479h1v1h-1zM136 480h1v1h-1zM137 480h1v1h-1zM138 480h1v1h-1zM139 481h1v1h-1zM140 481h1v1h-1zM141 482h1v1h-1zM142 482h1v1h-1zM143 482h1v1h-1zM144 483h1v1h-1zM145 483h1v1h-1zM146 484h1v1h-1zM147 484h1v1h-1zM148 485h1v1h-1zM149 486h1v1h-1zM150 486h1v1h-1zM151 487h1v1h-1zM152 487h1v1h-1zM153 488h1v1h-1zM154 489h1v1h-1zM155 489h1v1h-1zM156 490h1v1h-1zM157 491h1v1h-1zM158 491h1v1h-1zM159 492h1v1h-1zM160 493h1v1h-1zM161 494h1v1h-1zM162 494h1v1h-1zM163 495h1v1h-1zM164 496h1v1h-1zM165 497h1v1h-1zM166 498h1v1h-1zM167 498h1v1h-1zM168 499h1v1h-1zM169 500h1v1h-1zM170 501h1v1h-1zM171 502h1v1h-1zM172 503h1v1h-1zM173 504h1v1h-1zM174 504h1v1h-1zM175 505h1v1h-1zM176 506h1v1h-1zM177 507h1v1h-1zM178 508h1v1h-1zM179 509h1v1h-1zM180 510h1v1h-1zM181 511h1v1h-1zM182 512h1v1h-1zM183 513h1v1h-1zM184 514h1v1h-1zM185 515h1v1h-1zM186 516h1v1h-1zM187 517h1v1h-1zM188 518h1v1h-1zM189 519h1v1h-1zM190 520h1v1h-1zM191 521h1v1h-1zM192 522h1v1h-1zM193 523h1v1h-1zM194 524h1v1h-1zM195 525h1v1h-1zM196 526h1v1h-1zM197 527h1v1h-1zM198 528h1v1h-1zM199 529h1v1h-1zM200 530h1v1h-1zM201 531h1v1h-1zM202 532h1v1h-1zM203 533h1v1h-1zM204 534h1v1h-1zM205 535h1v1h-1zM206 536h1v2h-1zM207 538h1v1h-1zM208 539h1v1h-1zM209 540h1v1h-1zM210 541h1v1h-1zM211 542h1v1h-1zM212 543h1v1h-1zM213 544h1v1h-1zM214 545h1v1h-1zM215 546h1v1h-1zM216 547h1v1h-1zM217 548h1v1h-1zM218 549h1v1h-1zM219 550h1v1h-1zM220 551h1v1h-1zM221 552h1v1h-1zM222 553h1v1h-1zM223 553h1v1h-1zM224 554h1v1h-1zM225 555h1v1h-1zM226 556h1v1h-1zM227 557h1v1h-1zM228 558h1v1h-1zM229 559h1v1h-1zM230 560h1v1h-1zM231 560h1v1h-1zM232 561h1v1h-1zM233 562h1v1h-1zM234 563h1v1h-1zM235 563h1v1h-1zM236 564h1v1h-1zM237 565h1v1h-1zM238 566h1v1h-1zM239 566h1v1h-1zM240 567h1v1h-1zM241 568h1v1h-1zM242 568h1v1h-1zM243 569h1v1h-1zM244 569h1v1h-1zM245 570h1v1h-1zM246 571h1v1h-1zM247 571h1v1h-1zM248 572h1v1h-1zM249 572h1v1h-1zM250 573h1v1h-1zM251 573h1v1h-1zM252 574h1v1h-1zM253 574h1v1h-1zM254 574h1v1h-1zM255 575h1v1h-1zM256 575h1v1h-1zM257 575h1v1h-1zM258 576h1v1h-1zM259 576h1v1h-1zM260 576h1v1h-1zM261 577h1v1h-1zM262 577h1v1h-1zM263 577h1v1h-1zM264 577h1v1h-1zM265 577h1v1h-1zM266 577h1v1h-1zM267 578h1v1h-1zM268 578h1v1h-1zM269 578h1v1h-1zM270 578h1v1h-1zM271 578h1v1h-1zM272 578h1v1h-1zM273 578h1v1h-1zM274 578h1v1h-1zM275 578h1v1h-1zM276 578h1v1h-1zM277 577h1v1h-1zM278 577h1v1h-1zM279 577h1v1h-1zM280 577h1v1h-1zM281 577h1v1h-1zM282 577h1v1h-1zM283 576h1v1h-1zM284 576h1v1h-1zM285 576h1v1h-1zM286 575h1v1h-1zM287 575h1v1h-1zM288 575h1v1h-1zM289 574h1v1h-1zM290 574h1v1h-1zM291 574h1v1h-1zM292 573h1v1h-1zM293 573h1v1h-1zM294 572h1v1h-1zM295 572h1v1h-1zM296 571h1v1h-1zM297 571h1v1h-1zM298 570h1v1h-1zM299 570h1v1h-1zM300 569h1v1h-1zM301 568h1v1h-1zM302 568h1v1h-1zM303 567h1v1h-1zM304 566h1v1h-1zM305 566h1v1h-1zM306 565h1v1h-1zM307 564h1v1h-1zM308 564h1v1h-1zM309 563h1v1h-1zM310 562h1v1h-1zM311 561h1v1h-1zM312 561h1v1h-1zM313 560h1v1h-1zM314 559h1v1h-1zM315 558h1v1h-1zM316 557h1v1h-1zM317 556h1v1h-1zM318 555h1v1h-1zM319 555h1v1h-1zM320 554h1v1h-1zM321 553h1v1h-1zM322 552h1v1h-1zM323 551h1v1h-1zM324 550h1v1h-1zM325 549h1v1h-1zM326 548h1v1h-1zM327 547h1v1h-1zM328 546h1v1h-1zM329 545h1v1h-1zM330 544h1v1h-1zM331 543h1v1h-1zM332 542h1v1h-1zM333 541h1v1h-1zM334 540h1v1h-1zM335 539h1v1h-1zM336 538h1v1h-1zM337 537h1v1h-1zM338 536h1v1h-1zM339 535h1v1h-1zM340 534h1v1h-1zM341 533h1v1h-1zM342 531h1v2h-1zM343 530h1v1h-1zM344 529h1v1h-1zM345 528h1v1h-1zM346 527h1v1h-1zM347 526h1v1h-1zM348 525h1v1h-1zM349 524h1v1h-1zM350 523h1v1h-1zM351 522h1v1h-1zM352 521h1v1h-1zM353 520h1v1h-1zM354 519h1v1h-1zM355 518h1v1h-1zM356 517h1v1h-1zM357 516h1v1h-1zM358 515h1v1h-1zM359 514h1v1h-1zM360 513h1v1h-1zM361 512h1v1h-1zM362 511h1v1h-1zM363 510h1v1h-1zM364 509h1v1h-1zM365 508h1v1h-1zM366 507h1v1h-1zM367 506h1v1h-1zM368 506h1v1h-1zM369 505h1v1h-1zM370 504h1v1h-1zM371 503h1v1h-1zM372 502h1v1h-1zM373 501h1v1h-1zM374 500h1v1h-1zM375 499h1v1h-1zM376 499h1v1h-1zM377 498h1v1h-1zM378 497h1v1h-1zM379 496h1v1h-1zM380 495h1v1h-1zM381 495h1v1h-1zM382 494h1v1h-1zM383 493h1v1h-1zM384 492h1v1h-1zM385 492h1v1h-1zM386 491h1v1h-1zM387 490h1v1h-1zM388 489h1v1h-1zM389 489h1v1h-1zM390 488h1v1h-1zM391 488h1v1h-1zM392 487h1v1h-1zM393 486h1v1h-1zM394 486h1v1h-1zM395 485h1v1h-1zM396 485h1v1h-1zM397 484h1v1h-1zM398 484h1v1h-1zM399 483h1v1h-1zM400 483h1v1h-1zM401 482h1v1h-1zM402 482h1v1h-1zM403 481h1v1h-1zM404 481h1v1h-1zM405 480h1v1h-1zM406 480h1v1h-1zM407 480h1v1h-1zM408 479h1v1h-1zM409 479h1v1h-1zM410 479h1v1h-1zM411 479h1v1h-1zM412 478h1v1h-1zM413 478h1v1h-1zM414 478h1v1h-1zM415 478h1v1h-1zM416 478h1v1h-1zM417 477h1v1h-1zM418 477h1v1h-1zM419 477h1v1h-1zM420 477h1v1h-1zM421 477h1v1h-1zM422 477h1v1h-1zM423 477h1v1h-1zM424 477h1v1h-1zM425 477h1v1h-1zM426 477h1v1h-1zM427 477h1v1h-1zM428 477h1v1h-1zM429 477h1v1h-1zM430 477h1v1h-1zM431 478h1v1h-1zM432 478h1v1h-1zM433 478h1v1h-1zM434 478h1v1h-1zM435 478h1v1h-1zM436 479h1v1h-1zM437 479h1v1h-1zM438 479h1v1h-1zM439 480h1v1h-1zM440 480h1v1h-1zM441 480h1v1h-1zM442 481h1v1h-1zM443 481h1v1h-1zM444 481h1v1h-1zM445 482h1v1h-1zM446 482h1v1h-1zM447 483h1v1h-1zM448 483h1v1h-1zM449 484h1v1h-1zM450 484h1v1h-1zM451 485h1v1h-1zM452 485h1v1h-1zM453 486h1v1h-1zM454 486h1v1h-1zM455 487h1v1h-1zM456 488h1v1h-1zM457 488h1v1h-1zM458 489h1v1h-1zM459 490h1v1h-1zM460 490h1v1h-1zM461 491h1v1h-1zM462 492h1v1h-1zM463 492h1v1h-1zM464 493h1v1h-1zM465 494h1v1h-1zM466 495h1v1h-1zM467 495h1v1h-1zM468 496h1v1h-1zM469 497h1v1h-1zM470 498h1v1h-1zM471 499h1v1h-1zM472 500h1v1h-1zM473 500h1v1h-1zM474 501h1v1h-1zM475 502h1v1h-1zM476 503h1v1h-1zM477 504h1v1h-1zM478 505h1v1h-1zM479 506h1v1h-1zM480 507h1v1h-1zM481 508h1v1h-1zM482 509h1v1h-1zM483 510h1v1h-1zM484 510h1v1h-1zM485 511h1v1h-1zM486 512h1v1h-1zM487 513h1v1h-1zM488 514h1v1h-1zM489 515h1v1h-1zM490 516h1v1h-1zM491 517h1v1h-1zM492 518h1v1h-1zM493 519h1v1h-1zM494 520h1v1h-1zM495 521h1v1h-1zM496 522h1v1h-1zM497 523h1v1h-1zM498 524h1v1h-1zM499 525h1v1h-1zM500 526h1v1h-1zM501 527h1v1h-1zM502 528h1v1h-1zM503 529h1v2h-1zM504 531h1v1h-1zM505 532h1v1h-1zM506 533h1v1h-1zM507 534h1v1h-1zM508 535h1v1h-1zM509 536h1v1h-1zM510 537h1v1h-1zM511 538h1v1h-1zM512 539h1v1h-1zM513 540h1v1h-1zM514 541h1v1h-1zM515 542h1v1h-1zM516 543h1v1h-1zM517 544h1v1h-1zM518 545h1v1h-1zM519 546h1v1h-1zM520 547h1v1h-1zM521 548h1v1h-1zM522 549h1v1h-1zM523 550h1v1h-1zM524 551h1v1h-1zM525 552h1v1h-1zM526 553h1v1h-1zM527 554h1v1h-1zM528 555h1v1h-1zM529 556h1v1h-1zM530 557h1v1h-1zM531 557h1v1h-1zM532 558h1v1h-1zM533 559h1v1h-1zM534 560h1v1h-1zM535 561h1v1h-1zM536 562h1v1h-1zM537 562h1v1h-1zM538 563h1v1h-1zM539 564h1v1h-1zM540 565h1v1h-1zM541 565h1v1h-1zM542 566h1v1h-1zM543 567h1v1h-1zM544 567h1v1h-1zM545 568h1v1h-1zM546 569h1v1h-1zM547 569h1v1h-1zM548 570h1v1h-1zM549 570h1v1h-1zM550 571h1v1h-1zM551 571h1v1h-1zM552 572h1v1h-1zM553 572h1v1h-1zM554 573h1v1h-1zM555 573h1v1h-1zM556 574h1v1h-1zM557 574h1v1h-1zM558 575h1v1h-1zM559 575h1v1h-1zM560 575h1v1h-1zM561 576h1v1h-1zM562 576h1v1h-1zM563 576h1v1h-1zM564 576h1v1h-1zM565 577h1v1h-1zM566 577h1v1h-1zM567 577h1v1h-1zM568 577h1v1h-1zM569 577h1v1h-1zM570 577h1v1h-1zM571 578h1v1h-1zM572 578h1v1h-1zM573 578h1v1h-1zM574 578h1v1h-1zM575 578h1v1h-1zM576 578h1v1h-1zM577 578h1v1h-1zM578 578h1v1h-1zM579 578h1v1h-1zM580 578h1v1h-1zM581 577h1v1h-1zM582 577h1v1h-1zM583 577h1v1h-1zM584 577h1v1h-1zM585 577h1v1h-1zM586 576h1v1h-1zM587 576h1v1h-1zM588 576h1v1h-1zM589 576h1v1h-1zM590 575h1v1h-1zM591 575h1v1h-1zM592 575h1v1h-1zM593 574h1v1h-1zM594 574h1v1h-1zM595 573h1v1h-1zM596 573h1v1h-1zM597 573h1v1h-1zM598 572h1v1h-1zM599 572h1v1h-1zM600 571h1v1h-1zM601 570h1v1h-1zM602 570h1v1h-1zM603 569h1v1h-1zM604 569h1v1h-1zM605 568h1v1h-1zM606 567h1v1h-1zM607 567h1v1h-1zM608 566h1v1h-1zM609 565h1v1h-1zM610 565h1v1h-1zM611 564h1v1h-1zM612 563h1v1h-1zM613 563h1v1h-1zM614 562h1v1h-1zM615 561h1v1h-1zM616 560h1v1h-1zM617 559h1v1h-1zM618 559h1v1h-1zM619 558h1v1h-1zM620 557h1v1h-1zM621 556h1v1h-1zM622 555h1v1h-1zM623 554h1v1h-1zM624 553h1v1h-1zM625 552h1v1h-1zM626 551h1v1h-1zM627 550h1v1h-1zM628 549h1v1h-1zM629 549h1v1h-1zM630 548h1v1h-1zM631 547h1v1h-1zM632 546h1v1h-1zM633 545h1v1h-1zM634 544h1v1h-1zM635 543h1v1h-1zM636 541h1v2h-1zM637 540h1v1h-1zM638 539h1v1h-1zM639 538h1v1h-1zM640 537h1v1h-1zM641 536h1v1h-1zM642 535h1v1h-1zM643 534h1v1h-1zM644 533h1v1h-1zM645 532h1v1h-1zM646 531h1v1h-1zM647 530h1v1h-1zM648 529h1v1h-1zM649 528h1v1h-1zM650 527h1v1h-1zM651 526h1v1h-1zM652 525h1v1h-1zM653 523h1v2h-1zM654 522h1v1h-1zM655 521h1v1h-1zM656 520h1v1h-1zM657 519h1v1h-1zM658 519h1v1h-1zM659 518h1v1h-1zM660 517h1v1h-1zM661 516h1v1h-1zM662 515h1v1h-1zM663 514h1v1h-1zM664 513h1v1h-1zM665 512h1v1h-1zM666 511h1v1h-1zM667 510h1v1h-1zM668 509h1v1h-1zM669 508h1v1h-1zM670 507h1v1h-1zM671 506h1v1h-1zM672 505h1v1h-1zM673 504h1v1h-1zM674 503h1v1h-1zM675 502h1v1h-1zM676 502h1v1h-1zM677 501h1v1h-1zM678 500h1v1h-1zM679 499h1v1h-1zM680 498h1v1h-1zM681 497h1v1h-1zM682 496h1v1h-1zM683 496h1v1h-1zM684 495h1v1h-1zM685 494h1v1h-1zM686 493h1v1h-1zM687 493h1v1h-1zM688 492h1v1h-1zM689 491h1v1h-1zM690 490h1v1h-1zM691 490h1v1h-1zM692 489h1v1h-1zM693 488h1v1h-1zM694 488h1v1h-1zM695 487h1v1h-1zM696 487h1v1h-1zM697 486h1v1h-1zM698 485h1v1h-1zM699 485h1v1h-1zM700 484h1v1h-1zM701 484h1v1h-1zM702 483h1v1h-1zM703 483h1v1h-1zM704 482h1v1h-1zM705 482h1v1h-1zM706 481h1v1h-1zM707 481h1v1h-1zM708 481h1v1h-1zM709 480h1v1h-1zM710 480h1v1h-1zM711 480h1v1h-1zM712 479h1v1h-1zM713 479h1v1h-1zM714 479h1v1h-1zM715 478h1v1h-1zM716 478h1v1h-1zM717 478h1v1h-1zM718 478h1v1h-1zM719 478h1v1h-1zM720 478h1v1h-1zM721 477h1v1h-1zM722 477h1v1h-1zM723 477h1v1h-1zM724 477h1v1h-1zM725 477h1v1h-1zM726 477h1v1h-1zM727 477h1v1h-1zM728 477h1v1h-1zM729 477h1v1h-1zM730 477h1v1h-1zM731 477h1v1h-1zM732 477h1v1h-1zM733 477h1v1h-1zM734 478h1v1h-1zM735 478h1v1h-1zM736 478h1v1h-1zM737 478h1v1h-1zM738 478h1v1h-1zM739 479h1v1h-1zM740 479h1v1h-1zM741 479h1v1h-1zM742 479h1v1h-1zM743 480h1v1h-1zM744 480h1v1h-1zM745 480h1v1h-1zM746 481h1v1h-1zM747 481h1v1h-1zM748 482h1v1h-1zM749 482h1v1h-1zM750 482h1v1h-1zM751 483h1v1h-1zM752 483h1v1h-1zM753 484h1v1h-1zM754 484h1v1h-1zM755 485h1v1h-1zM756 486h1v1h-1zM757 486h1v1h-1zM758 487h1v1h-1zM759 487h1v1h-1zM760 488h1v1h-1zM761 489h1v1h-1zM762 489h1v1h-1zM763 490h1v1h-1zM764 491h1v1h-1zM765 491h1v1h-1zM766 492h1v1h-1zM767 493h1v1h-1zM768 494h1v1h-1zM769 494h1v1h-1zM770 495h1v1h-1zM771 496h1v1h-1zM772 497h1v1h-1zM773 498h1v1h-1zM774 498h1v1h-1zM775 499h1v1h-1zM776 500h1v1h-1zM777 501h1v1h-1zM778 502h1v1h-1zM779 503h1v1h-1zM780 504h1v1h-1zM781 504h1v1h-1zM782 505h1v1h-1zM783 506h1v1h-1zM784 507h1v1h-1zM785 508h1v1h-1zM786 509h1v1h-1zM787 510h1v1h-1zM788 511h1v1h-1zM789 512h1v1h-1zM790 513h1v1h-1zM791 514h1v1h-1zM792 515h1v1h-1zM793 516h1v1h-1zM794 517h1v1h-1zM795 518h1v1h-1zM796 519h1v1h-1zM797 520h1v1h-1zM798 521h1v1h-1zM799 522h1v1h-1zM800 523h1v1h-1zM801 524h1v1h-1zM802 525h1v1h-1zM803 526h1v1h-1zM804 527h1v1h-1zM805 528h1v1h-1zM806 529h1v1h-1zM807 530h1v1h-1zM808 531h1v1h-1zM809 532h1v1h-1zM810 533h1v1h-1zM811 534h1v1h-1zM812 535h1v1h-1zM813 536h1v2h-1zM814 538h1v1h-1zM815 539h1v1h-1zM816 540h1v1h-1zM817 541h1v1h-1zM818 542h1v1h-1zM819 543h1v1h-1zM820 544h1v1h-1zM821 545h1v1h-1zM822 546h1v1h-1zM823 547h1v1h-1zM824 548h1v1h-1zM825 549h1v1h-1zM826 550h1v1h-1zM827 551h1v1h-1zM828 552h1v1h-1zM829 553h1v1h-1zM830 553h1v1h-1zM831 554h1v1h-1zM832 555h1v1h-1zM833 556h1v1h-1zM834 557h1v1h-1zM835 558h1v1h-1zM836 559h1v1h-1zM837 560h1v1h-1zM838 560h1v1h-1zM839 561h1v1h-1zM840 562h1v1h-1zM841 563h1v1h-1zM842 563h1v1h-1zM843 564h1v1h-1zM844 565h1v1h-1zM845 566h1v1h-1zM846 566h1v1h-1zM847 567h1v1h-1zM848 568h1v1h-1zM849 568h1v1h-1zM850 569h1v1h-1zM851 569h1v1h-1zM852 570h1v1h-1zM853 571h1v1h-1zM854 571h1v1h-1zM855 572h1v1h-1zM856 572h1v1h-1zM857 573h1v1h-1zM858 573h1v1h-1zM859 574h1v1h-1zM860 574h1v1h-1zM861 574h1v1h-1zM862 575h1v1h-1zM863 575h1v1h-1zM864 575h1v1h-1zM865 576h1v1h-1zM866 576h1v1h-1zM867 576h1v1h-1zM868 577h1v1h-1zM869 577h1v1h-1zM870 577h1v1h-1zM871 577h1v1h-1zM872 577h1v1h-1zM873 577h1v1h-1zM874 578h1v1h-1zM875 578h1v1h-1zM876 578h1v1h-1zM877 578h1v1h-1zM878 578h1v1h-1zM879 578h1v1h-1zM880 578h1v1h-1zM881 578h1v1h-1zM882 578h1v1h-1zM883 578h1v1h-1zM884 577h1v1h-1zM885 577h1v1h-1zM886 577h1v1h-1zM887 577h1v1h-1zM888 577h1v1h-1zM889 577h1v1h-1zM890 576h1v1h-1zM891 576h1v1h-1zM892 576h1v1h-1zM893 575h1v1h-1zM894 575h1v1h-1zM895 575h1v1h-1zM896 574h1v1h-1zM897 574h1v1h-1zM898 574h1v1h-1zM899 573h1v1h-1zM900 573h1v1h-1zM901 572h1v1h-1zM902 572h1v1h-1zM903 571h1v1h-1zM904 571h1v1h-1zM905 570h1v1h-1zM906 570h1v1h-1zM907 569h1v1h-1zM908 568h1v1h-1zM909 568h1v1h-1zM910 567h1v1h-1zM911 566h1v1h-1zM912 566h1v1h-1zM913 565h1v1h-1zM914 564h1v1h-1zM915 564h1v1h-1zM916 563h1v1h-1zM917 562h1v1h-1zM918 561h1v1h-1zM919 561h1v1h-1zM920 560h1v1h-1zM921 559h1v1h-1zM922 558h1v1h-1zM923 557h1v1h-1zM924 556h1v1h-1zM925 555h1v1h-1zM926 555h1v1h-1zM927 554h1v1h-1zM928 553h1v1h-1zM929 552h1v1h-1zM930 551h1v1h-1zM931 550h1v1h-1zM932 549h1v1h-1zM933 548h1v1h-1zM934 547h1v1h-1zM935 546h1v1h-1zM936 545h1v1h-1zM937 544h1v1h-1zM938 543h1v1h-1zM939 542h1v1h-1zM940 541h1v1h-1zM941 540h1v1h-1zM942 539h1v1h-1zM943 538h1v1h-1zM944 537h1v1h-1zM945 536h1v1h-1zM946 535h1v1h-1zM947 534h1v1h-1zM948 533h1v1h-1zM949 531h1v2h-1zM950 530h1v1h-1zM951 529h1v1h-1zM952 528h1v1h-1zM953 527h1v1h-1zM954 526h1v1h-1zM955 525h1v1h-1zM956 524h1v1h-1zM957 523h1v1h-1zM958 522h1v1h-1zM959 521h1v1h-1zM960 520h1v1h-1zM961 519h1v1h-1zM962 518h1v1h-1zM963 517h1v1h-1zM964 516h1v1h-1zM965 515h1v1h-1zM966 514h1v1h-1zM967 513h1v1h-1zM968 512h1v1h-1zM969 511h1v1h-1zM970 510h1v1h-1zM971 509h1v1h-1zM972 508h1v1h-1zM973 507h1v1h-1zM974 506h1v1h-1zM975 506h1v1h-1zM976 505h1v1h-1zM977 504h1v1h-1zM978 503h1v1h-1zM979 502h1v1h-1zM980 501h1v1h-1zM981 500h1v1h-1zM982 499h1v1h-1zM983 499h1v1h-1zM984 498h1v1h-1zM985 497h1v1h-1zM986 496h1v1h-1zM987 495h1v1h-1zM988 495h1v1h-1zM989 494h1v1h-1zM990 493h1v1h-1zM991 492h1v1h-1zM992 492h1v1h-1zM993 491h1v1h-1zM994 490h1v1h-1zM995 489h1v1h-1zM996 489h1v1h-1zM997 488h1v1h-1zM998 488h1v1h-1zM999 487h1v1h-1zM1000 486h1v1h-1zM1001 486h1v1h-1zM1002 485h1v1h-1zM1003 485h1v1h-1zM1004 484h1v1h-1zM1005 484h1v1h-1zM1006 483h1v1h-1zM1007 483h1v1h-1zM1008 482h1v1h-1zM1009 482h1v1h-1zM1010 481h1v1h-1zM1011 481h1v1h-1zM1012 480h1v1h-1zM1013 480h1v1h-1zM1014 480h1v1h-1zM1015 479h1v1h-1zM1016 479h1v1h-1zM1017 479h1v1h-1zM1018 479h1v1h-1zM1019 478h1v1h-1zM1020 478h1v1h-1zM1021 478h1v1h-1zM1022 478h1v1h-1zM1023 478h1v1h-1zM1024 477h1v1h-1zM1025 477h1v1h-1zM1026 477h1v1h-1zM1027 477h1v1h-1zM1028 477h1v1h-1zM1029 477h1v1h-1zM1030 477h1v1h-1zM1031 477h1v1h-1zM1032 477h1v1h-1zM1033 477h1v1h-1zM1034 477h1v1h-1zM1035 477h1v1h-1zM1036 477h1v1h-1zM1037 477h1v1h-1zM1038 478h1v1h-1zM1039 478h1v1h-1zM1040 478h1v1h-1zM1041 478h1v1h-1zM1042 478h1v1h-1zM1043 479h1v1h-1zM1044 479h1v1h-1zM1045 479h1v1h-1zM1046 480h1v1h-1zM1047 480h1v1h-1zM1048 480h1v1h-1zM1049 481h1v1h-1zM1050 481h1v1h-1zM1051 481h1v1h-1zM1052 482h1v1h-1zM1053 482h1v1h-1zM1054 483h1v1h-1zM1055 483h1v1h-1zM1056 484h1v1h-1zM1057 484h1v1h-1zM1058 485h1v1h-1zM1059 485h1v1h-1zM1060 486h1v1h-1zM1061 486h1v1h-1zM1062 487h1v1h-1zM1063 488h1v1h-1zM1064 488h1v1h-1zM1065 489h1v1h-1zM1066 490h1v1h-1zM1067 490h1v1h-1zM1068 491h1v1h-1zM1069 492h1v1h-1zM1070 492h1v1h-1zM1071 493h1v1h-1zM1072 494h1v1h-1zM1073 495h1v1h-1zM1074 495h1v1h-1zM1075 496h1v1h-1zM1076 497h1v1h-1zM1077 498h1v1h-1zM1078 499h1v1h-1zM1079 500h1v1h-1zM1080 500h1v1h-1zM1081 501h1v1h-1zM1082 502h1v1h-1zM1083 503h1v1h-1zM1084 504h1v1h-1zM1085 505h1v1h-1zM1086 506h1v1h-1zM1087 507h1v1h-1zM1088 508h1v1h-1zM1089 509h1v1h-1zM1090 510h1v1h-1zM1091 510h1v1h-1zM1092 511h1v1h-1zM1093 512h1v1h-1zM1094 513h1v1h-1zM1095 514h1v1h-1zM1096 515h1v1h-1zM1097 516h1v1h-1zM1098 517h1v1h-1zM1099 518h1v1h-1zM1100 519h1v1h-1zM1101 520h1v1h-1zM1102 521h1v1h-1zM1103 522h1v1h-1zM1104 523h1v1h-1zM1105 524h1v1h-1zM1106 525h1v1h-1zM1107 526h1v1h-1zM1108 527h1v1h-1zM1109 528h1v1h-1zM1110 529h1v2h-1zM1111 531h1v1h-1zM1112 532h1v1h-1zM1113 533h1v1h-1zM1114 534h1v1h-1zM1115 535h1v1h-1zM1116 536h1v1h-1zM1117 537h1v1h-1zM1118 538h1v1h-1zM1119 539h1v1h-1zM1120 540h1v1h-1zM1121 541h1v1h-1zM1122 542h1v1h-1zM1123 543h1v1h-1zM1124 544h1v1h-1zM1125 545h1v1h-1zM1126 546h1v1h-1zM1127 547h1v1h-1zM1128 548h1v1h-1zM1129 549h1v1h-1zM1130 550h1v1h-1zM1131 551h1v1h-1zM1132 552h1v1h-1zM1133 553h1v1h-1zM1134 554h1v1h-1zM1135 555h1v1h-1zM1136 556h1v1h-1zM1137 557h1v1h-1zM1138 557h1v1h-1zM1139 558h1v1h-1zM1140 559h1v1h-1zM1141 560h1v1h-1zM1142 561h1v1h-1zM1143 562h1v1h-1zM1144 562h1v1h-1zM1145 563h1v1h-1zM1146 564h1v1h-1zM1147 565h1v1h-1zM1148 565h1v1h-1zM1149 566h1v1h-1zM1150 567h1v1h-1zM1151 567h1v1h-1zM1152 568h1v1h-1zM1153 569h1v1h-1zM1154 569h1v1h-1zM1155 570h1v1h-1zM1156 570h1v1h-1zM1157 571h1v1h-1zM1158 571h1v1h-1zM1159 572h1v1h-1zM1160 572h1v1h-1zM1161 573h1v1h-1zM1162 573h1v1h-1zM1163 574h1v1h-1zM1164 574h1v1h-1zM1165 575h1v1h-1zM1166 575h1v1h-1zM1167 575h1v1h-1zM1168 576h1v1h-1zM1169 576h1v1h-1zM1170 576h1v1h-1zM1171 576h1v1h-1zM1172 577h1v1h-1zM1173 577h1v1h-1zM1174 577h1v1h-1zM1175 577h1v1h-1zM1176 577h1v1h-1zM1177 577h1v1h-1zM1178 578h1v1h-1zM1179 578h1v1h-1zM1180 578h1v1h-1zM1181 578h1v1h-1zM1182 578h1v1h-1zM1183 578h1v1h-1zM1184 578h1v1h-1zM1185 578h1v1h-1zM1186 578h1v1h-1zM1187 578h1v1h-1zM1188 577h1v1h-1zM1189 577h1v1h-1zM1190 577h1v1h-1zM1191 577h1v1h-1zM1192 577h1v1h-1zM1193 576h1v1h-1zM1194 576h1v1h-1zM1195 576h1v1h-1zM1196 576h1v1h-1zM1197 575h1v1h-1zM1198 575h1v1h-1zM1199 575h1v1h-1zM1200 574h1v1h-1zM1201 574h1v1h-1zM1202 573h1v1h-1zM1203 573h1v1h-1zM1204 573h1v1h-1zM1205 572h1v1h-1zM1206 572h1v1h-1zM1207 571h1v1h-1zM1208 570h1v1h-1zM1209 570h1v1h-1zM1210 569h1v1h-1zM1211 569h1v1h-1zM1212 568h1v1h-1zM1213 567h1v1h-1zM1214 567h1v1h-1zM1215 566h1v1h-1zM1216 565h1v1h-1zM1217 565h1v1h-1zM1218 564h1v1h-1zM1219 563h1v1h-1zM1220 563h1v1h-1zM1221 562h1v1h-1zM1222 561h1v1h-1zM1223 560h1v1h-1zM1224 559h1v1h-1zM1225 559h1v1h-1zM1226 558h1v1h-1zM1227 557h1v1h-1zM1228 556h1v1h-1zM1229 555h1v1h-1zM1230 554h1v1h-1zM1231 553h1v1h-1zM1232 552h1v1h-1zM1233 551h1v1h-1zM1234 550h1v1h-1zM1235 549h1v1h-1zM1236 549h1v1h-1zM1237 548h1v1h-1zM1238 547h1v1h-1zM1239 546h1v1h-1zM1240 545h1v1h-1zM1241 544h1v1h-1zM1242 543h1v1h-1zM1243 541h1v2h-1zM1244 540h1v1h-1zM1245 539h1v1h-1zM1246 538h1v1h-1zM1247 537h1v1h-1zM1248 536h1v1h-1zM1249 535h1v1h-1zM1250 534h1v1h-1zM1251 533h1v1h-1zM1252 532h1v1h-1zM1253 531h1v1h-1zM1254 530h1v1h-1zM1255 529h1v1h-1zM1256 528h1v1h-1zM1257 527h1v1h-1zM1258 526h1v1h-1z"/></svg>
<svg width="1276" height="613" style="position:absolute;left:0;top:0;will-change:transform" font-family="Liberation Sans, sans-serif" font-size="14.4" stroke-width="0.35"><text transform="scale(0.8600,1)" x="9.02 18.45 23.51 32.61" y="23" fill="rgb(150,155,150)" stroke="rgb(150,155,150)">1.0V</text><text transform="scale(0.8600,1)" x="9.55 18.45 23.44 32.61" y="40" fill="rgb(150,155,150)" stroke="rgb(150,155,150)">0.8V</text><text transform="scale(0.8600,1)" x="9.55 18.45 23.34 32.61" y="58" fill="rgb(150,155,150)" stroke="rgb(150,155,150)">0.6V</text><text transform="scale(0.8600,1)" x="9.55 18.45 23.74 32.61" y="75" fill="rgb(150,155,150)" stroke="rgb(150,155,150)">0.4V</text><text transform="scale(0.8600,1)" x="9.55 18.45 23.69 32.61" y="93" fill="rgb(150,155,150)" stroke="rgb(150,155,150)">0.2V</text><text transform="scale(0.8600,1)" x="9.55 18.45 23.51 32.61" y="110" fill="rgb(150,155,150)" stroke="rgb(150,155,150)">0.0V</text><text transform="scale(0.8600,1)" x="3.55 9.55 18.45 23.69 32.61" y="127" fill="rgb(150,155,150)" stroke="rgb(150,155,150)">-0.2V</text><text transform="scale(0.8600,1)" x="3.55 9.55 18.45 23.74 32.61" y="145" fill="rgb(150,155,150)" stroke="rgb(150,155,150)">-0.4V</text><text transform="scale(0.8600,1)" x="3.55 9.55 18.45 23.34 32.61" y="162" fill="rgb(150,155,150)" stroke="rgb(150,155,150)">-0.6V</text><text transform="scale(0.8600,1)" x="3.55 9.55 18.45 23.44 32.61" y="180" fill="rgb(150,155,150)" stroke="rgb(150,155,150)">-0.8V</text><text transform="scale(0.8600,1)" x="3.55 9.02 18.45 23.51 32.61" y="197" fill="rgb(150,155,150)" stroke="rgb(150,155,150)">-1.0V</text><text transform="scale(0.8600,1)" x="9.02 18.45 23.51 32.61" y="218" fill="rgb(150,155,150)" stroke="rgb(150,155,150)">1.0V</text><text transform="scale(0.8600,1)" x="9.55 18.45 23.44 32.61" y="236" fill="rgb(150,155,150)" stroke="rgb(150,155,150)">0.8V</text><text transform="scale(0.8600,1)" x="9.55 18.45 23.34 32.61" y="253" fill="rgb(150,155,150)" stroke="rgb(150,155,150)">0.6V</text><text transform="scale(0.8600,1)" x="9.55 18.45 23.74 32.61" y="271" fill="rgb(150,155,150)" stroke="rgb(150,155,150)">0.4V</text><text transform="scale(0.8600,1)" x="9.55 18.45 23.69 32.61" y="288" fill="rgb(150,155,150)" stroke="rgb(150,155,150)">0.2V</text><text transform="scale(0.8600,1)" x="9.55 18.45 23.51 32.61" y="306" fill="rgb(150,155,150)" stroke="rgb(150,155,150)">0.0V</text><text transform="scale(0.8600,1)" x="3.55 9.55 18.45 23.69 32.61" y="323" fill="rgb(150,155,150)" stroke="rgb(150,155,150)">-0.2V</text><text transform="scale(0.8600,1)" x="3.55 9.55 18.45 23.74 32.61" y="341" fill="rgb(150,155,150)" stroke="rgb(150,155,150)">-0.4V</text><text transform="scale(0.8600,1)" x="3.55 9.55 18.45 23.34 32.61" y="358" fill="rgb(150,155,150)" stroke="rgb(150,155,150)">-0.6V</text><text transform="scale(0.8600,1)" x="3.55 9.55 18.45 23.44 32.61" y="376" fill="rgb(150,155,150)" stroke="rgb(150,155,150)">-0.8V</text><text transform="scale(0.8600,1)" x="3.55 9.02 18.45 23.51 32.61" y="393" fill="rgb(150,155,150)" stroke="rgb(150,155,150)">-1.0V</text><text transform="scale(0.8600,1)" x="5.09 14.20 23.51 32.61" y="414" fill="rgb(150,155,150)" stroke="rgb(150,155,150)">200V</text><text transform="scale(0.8600,1)" x="4.37 14.19 23.51 32.61" y="432" fill="rgb(150,155,150)" stroke="rgb(150,155,150)">150V</text><text transform="scale(0.8600,1)" x="4.37 14.20 23.51 32.61" y="450" fill="rgb(150,155,150)" stroke="rgb(150,155,150)">100V</text><text transform="scale(0.8600,1)" x="14.19 23.51 32.61" y="467" fill="rgb(150,155,150)" stroke="rgb(150,155,150)">50V</text><text transform="scale(0.8600,1)" x="23.51 32.61" y="485" fill="rgb(150,155,150)" stroke="rgb(150,155,150)">0V</text><text transform="scale(0.8600,1)" x="8.20 14.19 23.51 32.61" y="503" fill="rgb(150,155,150)" stroke="rgb(150,155,150)">-50V</text><text transform="scale(0.8600,1)" x="-1.10 4.37 14.20 23.51 32.61" y="521" fill="rgb(150,155,150)" stroke="rgb(150,155,150)">-100V</text><text transform="scale(0.8600,1)" x="-1.10 4.37 14.19 23.51 32.61" y="539" fill="rgb(150,155,150)" stroke="rgb(150,155,150)">-150V</text><text transform="scale(0.8600,1)" x="-1.10 5.09 14.20 23.51 32.61" y="556" fill="rgb(150,155,150)" stroke="rgb(150,155,150)">-200V</text><text transform="scale(0.8600,1)" x="-1.10 5.09 14.19 23.51 32.61" y="574" fill="rgb(150,155,150)" stroke="rgb(150,155,150)">-250V</text><text transform="scale(0.8600,1)" x="-1.10 4.92 14.20 23.51 32.61" y="592" fill="rgb(150,155,150)" stroke="rgb(150,155,150)">-300V</text><text transform="scale(0.9200,1)" x="33.35 41.65 55.25" y="608" fill="rgb(150,155,150)" stroke="rgb(150,155,150)">0ms</text><text transform="scale(0.9200,1)" x="165.10 173.17 186.77" y="608" fill="rgb(150,155,150)" stroke="rgb(150,155,150)">4ms</text><text transform="scale(0.9200,1)" x="297.42 305.78 319.38" y="608" fill="rgb(150,155,150)" stroke="rgb(150,155,150)">8ms</text><text transform="scale(0.9200,1)" x="424.12 433.19 441.65 455.25" y="608" fill="rgb(150,155,150)" stroke="rgb(150,155,150)">12ms</text><text transform="scale(0.9200,1)" x="556.73 565.79 574.26 587.86" y="608" fill="rgb(150,155,150)" stroke="rgb(150,155,150)">16ms</text><text transform="scale(0.9200,1)" x="688.62 697.48 705.78 719.38" y="608" fill="rgb(150,155,150)" stroke="rgb(150,155,150)">20ms</text><text transform="scale(0.9200,1)" x="820.15 829.23 837.30 850.90" y="608" fill="rgb(150,155,150)" stroke="rgb(150,155,150)">24ms</text><text transform="scale(0.9200,1)" x="952.75 961.55 969.91 983.51" y="608" fill="rgb(150,155,150)" stroke="rgb(150,155,150)">28ms</text><text transform="scale(0.9200,1)" x="1084.45 1092.97 1101.44 1115.03" y="608" fill="rgb(150,155,150)" stroke="rgb(150,155,150)">32ms</text><text transform="scale(0.9200,1)" x="1217.06 1225.57 1234.04 1247.64" y="608" fill="rgb(150,155,150)" stroke="rgb(150,155,150)">36ms</text><text transform="scale(0.9200,1)" x="1348.80 1357.26 1365.57 1379.16" y="608" fill="rgb(150,155,150)" stroke="rgb(150,155,150)">40ms</text><text transform="scale(0.8000,1)" x="776.40 787.03 792.24 801.74 807.16 816.80 827.16 836.44 846.49" y="13" fill="rgb(0,172,172)" stroke="rgb(0,172,172)" font-weight="bold" stroke-width="0.1">V(signdv)</text><text transform="scale(0.8000,1)" x="776.40 787.03 792.24 801.74 807.16 816.80 827.16 836.80 846.49" y="208" fill="rgb(255,0,0)" stroke="rgb(255,0,0)" font-weight="bold" stroke-width="0.1">V(signdp)</text><text transform="scale(0.8000,1)" x="418.90 429.53 434.30 443.99" y="404" fill="rgb(0,0,255)" stroke="rgb(0,0,255)" font-weight="bold" stroke-width="0.1">V(p)</text><text transform="scale(0.8000,1)" x="1160.15 1170.78 1175.91 1185.55 1195.11 1200.91 1210.19 1220.24" y="404" fill="rgb(0,255,0)" stroke="rgb(0,255,0)" font-weight="bold" stroke-width="0.1">V(dp/dv)</text></svg>
</body></html>
